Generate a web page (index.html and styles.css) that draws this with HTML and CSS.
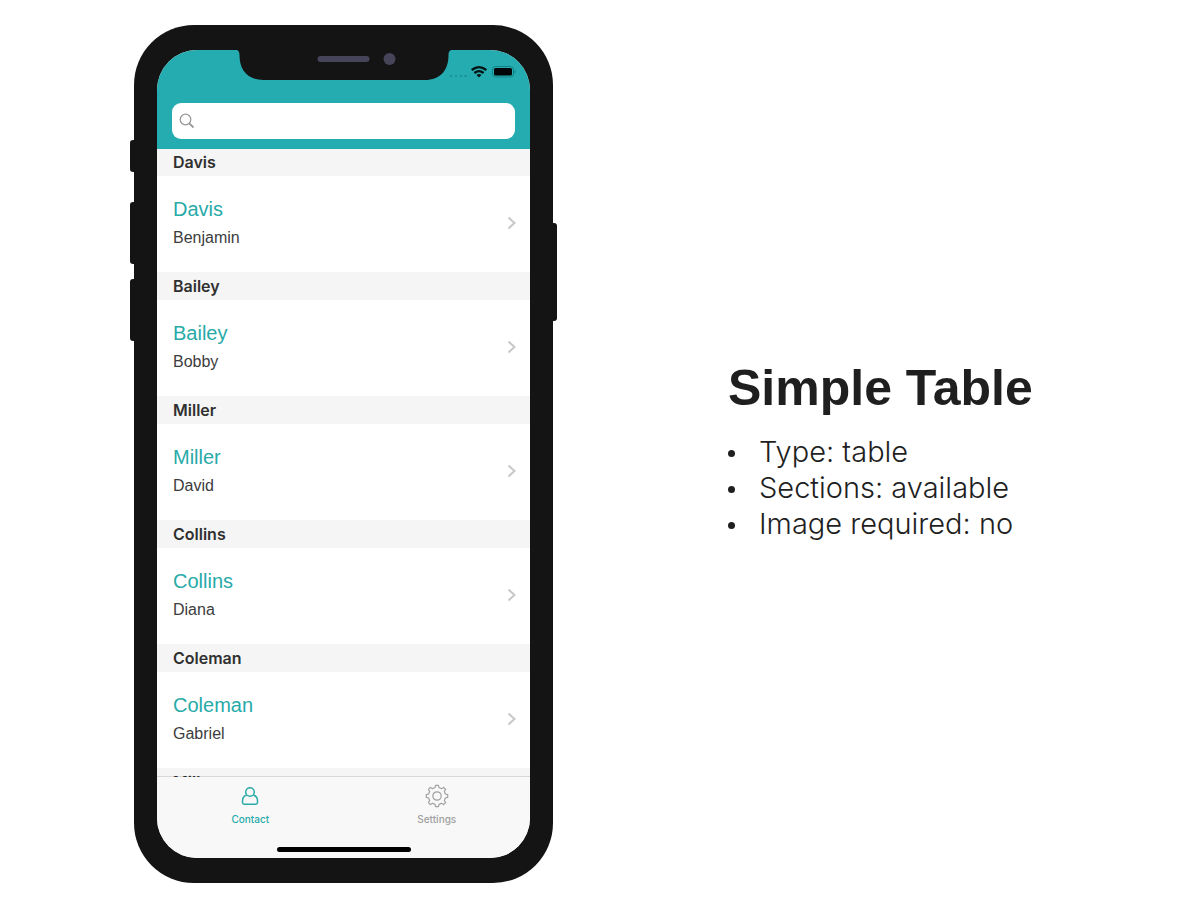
FILE: index.html
```html
<!DOCTYPE html>
<html lang="en">
<head>
<meta charset="utf-8">
<meta name="viewport" content="width=device-width, initial-scale=1">
<title>Simple Table</title>
<link rel="stylesheet" href="styles.css">
</head>
<body>
<main class="showcase">
  <div class="device">
    <span class="key key-mute"></span>
    <span class="key key-up"></span>
    <span class="key key-down"></span>
    <span class="key key-power"></span>
    <div class="screen">
      <header class="topbar">
        <svg class="notch" width="217" height="30" viewBox="0 0 217 30" aria-hidden="true">
          <path d="M0 0C3 0 4 2 4 5C4 20 12 30 28 30H189C205 30 213 20 213 5C213 2 214 0 217 0Z" fill="#141414"/>
          <rect x="82" y="6" width="52" height="6" rx="3" fill="#454459"/>
          <circle cx="154" cy="9" r="6" fill="#454459"/>
        </svg>
        <div class="status">
          <svg width="68" height="14" viewBox="0 0 68 14" aria-hidden="true">
            <g fill="#168c8e"><circle cx="3" cy="11" r="1.1"/><circle cx="8" cy="11" r="1.1"/><circle cx="13" cy="11" r="1.1"/><circle cx="17.5" cy="11" r="1.1"/></g>
            <g fill="none" stroke="#061314" stroke-width="2.3"><path d="M23.7 5Q31 -0.8 38.3 5"/><path d="M26.4 8Q31 4.200 35.600 8"/></g>
            <path d="M28.500 9.900Q31 8 33.500 9.900L31 12.400Z" fill="#061314"/>
            <rect x="44.500" y="1.500" width="21" height="10.500" rx="3" fill="none" stroke="#128487"/>
            <rect x="46" y="3" width="18" height="7.500" rx="1.500" fill="#020607"/>
            <path d="M67 5v3.500" stroke="#128487"/>
          </svg>
        </div>
        <label class="search">
          <svg width="16" height="16" viewBox="0 0 16 16" fill="none" stroke="#999" stroke-width="1.300" aria-hidden="true"><circle cx="6.500" cy="6.500" r="5.300"/><path d="M10.300 10.300L14.500 14.500" stroke-width="1.800"/></svg>
          <input type="search" aria-label="Search contacts">
        </label>
      </header>
      <div class="contacts">
        <section><h2>Davis</h2><a class="row" href="#"><span><b>Davis</b><i>Benjamin</i></span><svg class="chevron" width="9" height="14" viewBox="0 0 9 14" aria-hidden="true"><path d="M1.500 1.500L7.500 7L1.500 12.500"/></svg></a></section>
        <section><h2>Bailey</h2><a class="row" href="#"><span><b>Bailey</b><i>Bobby</i></span><svg class="chevron" width="9" height="14" viewBox="0 0 9 14" aria-hidden="true"><path d="M1.500 1.500L7.500 7L1.500 12.500"/></svg></a></section>
        <section><h2>Miller</h2><a class="row" href="#"><span><b>Miller</b><i>David</i></span><svg class="chevron" width="9" height="14" viewBox="0 0 9 14" aria-hidden="true"><path d="M1.500 1.500L7.500 7L1.500 12.500"/></svg></a></section>
        <section><h2>Collins</h2><a class="row" href="#"><span><b>Collins</b><i>Diana</i></span><svg class="chevron" width="9" height="14" viewBox="0 0 9 14" aria-hidden="true"><path d="M1.500 1.500L7.500 7L1.500 12.500"/></svg></a></section>
        <section><h2>Coleman</h2><a class="row" href="#"><span><b>Coleman</b><i>Gabriel</i></span><svg class="chevron" width="9" height="14" viewBox="0 0 9 14" aria-hidden="true"><path d="M1.500 1.500L7.500 7L1.500 12.500"/></svg></a></section>
        <section class="peek"><h2>Miller</h2></section>
      </div>
      <nav class="tabs">
        <button class="tab active" type="button">
          <svg width="24" height="24" viewBox="0 0 24 24" fill="none" stroke="currentColor" stroke-width="1.500" aria-hidden="true"><circle cx="12" cy="8" r="4.300"/><path d="M8.600 11.200C6 11.800 4.500 14 4.500 17V18.500Q4.500 20.200 6.200 20.200H17.800Q19.500 20.200 19.500 18.500V17C19.500 14 18 11.800 15.400 11.200"/></svg>
          Contact
        </button>
        <button class="tab" type="button">
          <svg width="24" height="24" viewBox="0 0 24 24" fill="none" stroke="currentColor" stroke-width="1.200" stroke-linejoin="round" aria-hidden="true"><circle cx="12" cy="12" r="4.200"/><path d="M10.600 1.300H13.400L14 3.700Q15.300 4 16.500 4.700L18.600 3.400L20.600 5.400L19.300 7.500Q20 8.700 20.300 10L22.700 10.600V13.400L20.300 14Q20 15.300 19.300 16.500L20.600 18.600L18.600 20.600L16.500 19.300Q15.300 20 14 20.300L13.400 22.700H10.600L10 20.300Q8.700 20 7.500 19.300L5.400 20.600L3.400 18.600L4.700 16.500Q4 15.300 3.700 14L1.300 13.400V10.600L3.700 10Q4 8.700 4.700 7.500L3.400 5.400L5.400 3.400L7.500 4.700Q8.700 4 10 3.700Z"/></svg>
          Settings
        </button>
      </nav>
      <span class="home"></span>
    </div>
  </div>
  <article class="info">
    <h1>Simple Table</h1>
    <ul>
      <li>Type: table</li>
      <li>Sections: available</li>
      <li>Image required: no</li>
    </ul>
  </article>
</main>
</body>
</html>
```
FILE: styles.css
```css
* { box-sizing: border-box; }
body {
  margin: 0;
  background: #fff;
  color: #1f1f1f;
  font-family: "Liberation Sans", Arial, sans-serif;
}
h1, h2, ul { margin: 0; padding: 0; }
.showcase {
  display: flex;
  align-items: center;
  gap: 175px;
  min-height: 100vh;
  padding: 24px 32px 24px 134px;
}
.device {
  position: relative;
  flex: 0 1 419px;
  padding: 25px 23px;
  border-radius: 60px;
  background: #141414;
}
.key {
  position: absolute;
  width: 8px;
  height: 62px;
  left: -4px;
  border-radius: 3px;
  background: #141414;
}
.key-mute { top: 115px; height: 32px; }
.key-up { top: 177px; }
.key-down { top: 254px; }
.key-power { top: 198px; left: auto; right: -4px; height: 98px; }
.screen {
  position: relative;
  display: flex;
  flex-direction: column;
  overflow: hidden;
  border-radius: 40px;
  background: #fff;
}
.topbar {
  position: relative;
  z-index: 1;
  display: flex;
  flex-direction: column;
  gap: 24px;
  padding: 15px 15px 10px;
  background: #25acb0;
}
.notch {
  position: absolute;
  top: 0;
  left: 50%;
  transform: translateX(-50%);
}
.status {
  display: flex;
  justify-content: flex-end;
  margin-right: -1px;
}
.status svg { display: block; }
.search {
  display: flex;
  align-items: center;
  gap: 8px;
  height: 36px;
  padding: 0 7px;
  border-radius: 9px;
  background: #fff;
}
.search input {
  flex: 1;
  min-width: 0;
  border: 0;
  outline: 0;
  background: transparent;
  font: 16px "Liberation Sans", Arial, sans-serif;
}
.contacts { margin-top: -1px; }
.contacts h2 {
  padding: 0 16px;
  background: #f5f5f5;
  color: #303030;
  font: 600 16px/28px Inter, "Liberation Sans", sans-serif;
}
.row {
  display: flex;
  align-items: center;
  justify-content: space-between;
  padding: 18px 14px 20px 16px;
  color: #3c3c3c;
  text-decoration: none;
}
.row b, .row i {
  display: block;
  font-weight: 400;
  font-style: normal;
}
.row b { color: #27aaa8; font-size: 20px; line-height: 30px; }
.row i { font-size: 16px; line-height: 28px; }
.chevron { fill: none; stroke: #c8c8c8; stroke-width: 2; }
.peek { height: 9px; overflow: hidden; }
.tabs {
  position: relative;
  display: flex;
  margin-top: -1px;
  border-top: 1px solid rgba(0, 0, 0, 0.12);
  padding: 7px 0 32px;
  background: #f8f8f8 padding-box;
}
.tab {
  flex: 1;
  display: flex;
  flex-direction: column;
  align-items: center;
  gap: 4px;
  padding: 0;
  border: 0;
  background: transparent;
  color: #a0a0a0;
  font: 500 10px/14px Inter, "Liberation Sans", sans-serif;
}
.active { color: #27aaa8; }
.home {
  position: absolute;
  bottom: 6px;
  left: 50%;
  width: 134px;
  height: 5px;
  border-radius: 3px;
  background: #000;
  transform: translateX(-50%);
}
.info { flex: 1; padding-bottom: 8px; }
.info h1 { font-size: 50px; line-height: 60px; }
.info ul {
  margin-top: 16px;
  font: 300 29px/36px Inter, "Liberation Sans", sans-serif;
  list-style: none;
}
.info li {
  display: flex;
  align-items: center;
  gap: 24px;
}
.info li::before {
  content: "";
  width: 7px;
  height: 7px;
  margin-top: 4px;
  border-radius: 50%;
  background: #1f1f1f;
}
```
